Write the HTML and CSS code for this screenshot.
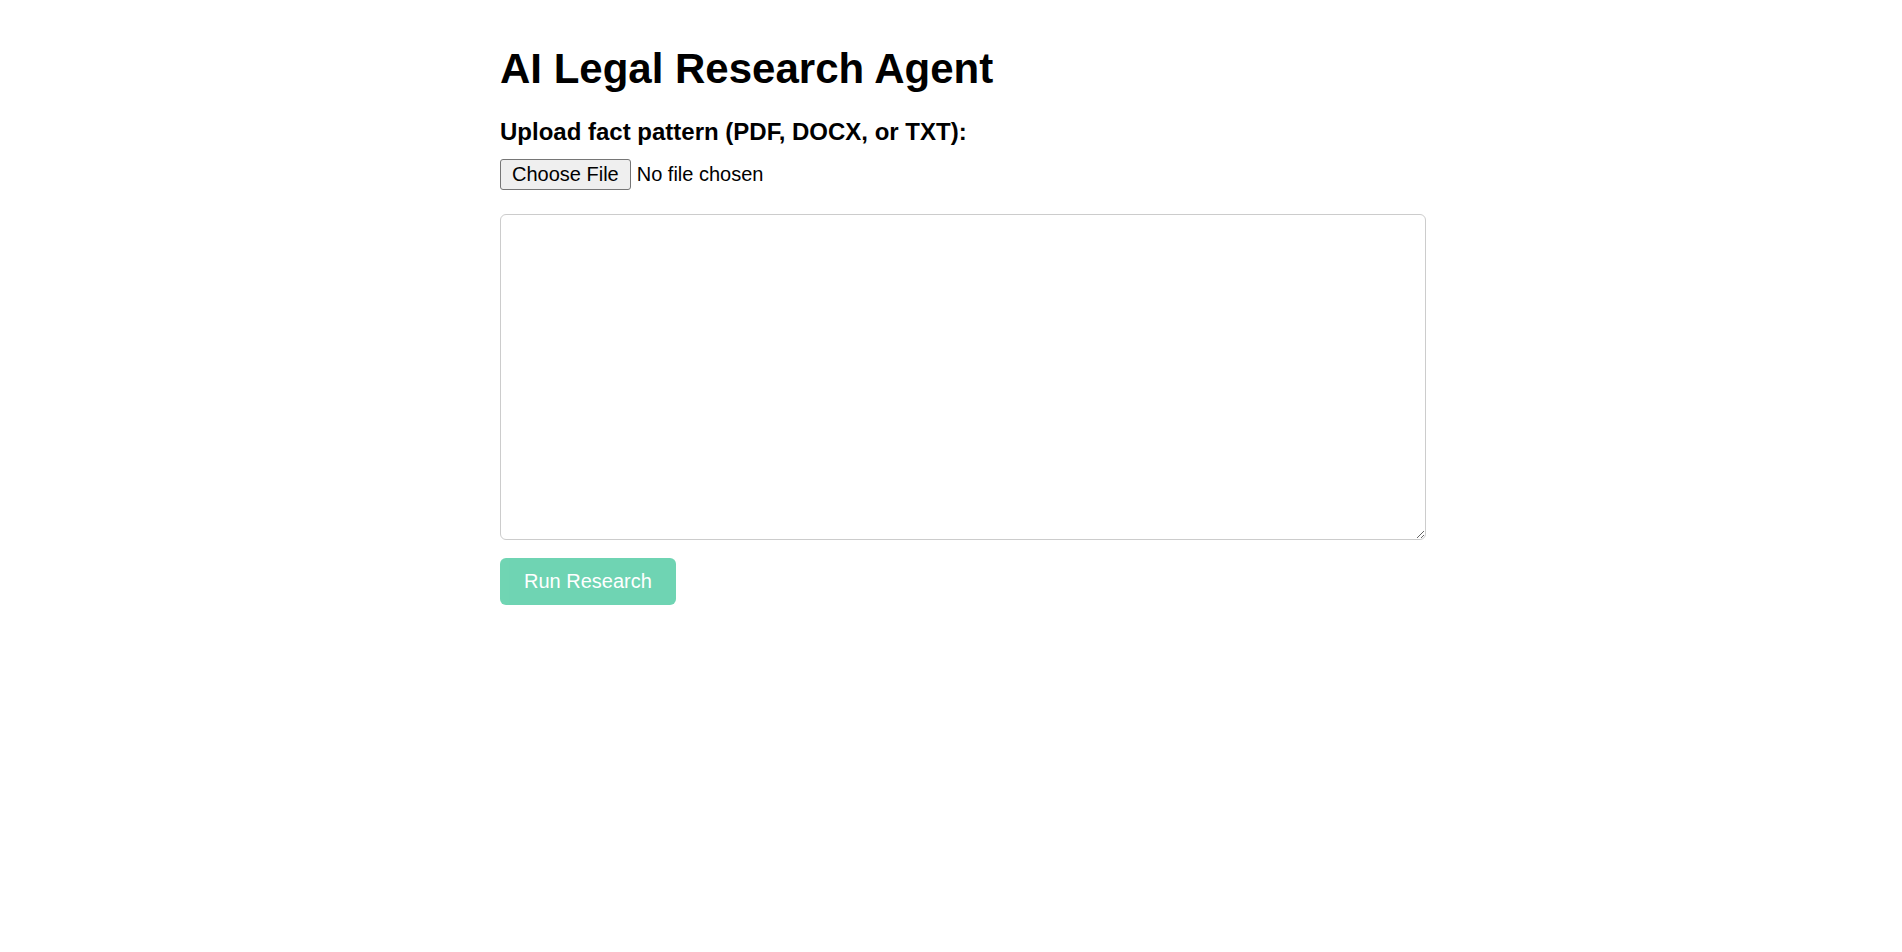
FILE: index.html
```html
<!DOCTYPE html>
<html lang="en">
<head>
<meta charset="utf-8">
<title>AI Legal Research Agent</title>
<link rel="stylesheet" href="styles.css">
</head>
<body>
<main class="container">
  <h1 class="title">AI Legal Research Agent</h1>
  <label class="upload-label" for="file">Upload fact pattern (PDF, DOCX, or TXT):</label>
  <input class="file-input" id="file" type="file" accept=".pdf,.docx,.txt">
  <textarea class="facts"></textarea>
  <button class="run-btn" disabled>Run Research</button>
</main>
</body>
</html>
```

FILE: styles.css
```css
html, body {
  margin: 0;
  padding: 0;
  background: #ffffff;
}

body {
  font-family: "Liberation Sans", Arial, sans-serif;
  color: #000;
}

.container {
  max-width: 902px;
  margin: 0 auto;
  padding-top: 45px;
}

.title {
  font-size: 42px;
  font-weight: bold;
  line-height: 48px;
  margin: 0 0 25px 0;
}

.upload-label {
  display: block;
  font-size: 24px;
  font-weight: bold;
  line-height: 28px;
  margin-bottom: 13px;
}

.file-input {
  display: block;
  font-family: "Liberation Sans", Arial, sans-serif;
  font-size: 20px;
  line-height: 23px;
  color: #000;
  margin: 0 0 24px 0;
}

.file-input::file-selector-button {
  font-family: "Liberation Sans", Arial, sans-serif;
  font-size: 20px;
  line-height: 23px;
  padding: 3px 11px;
  margin: 0 6px 0 0;
  border: 1px solid #767676;
  border-radius: 3px;
  background: #efefef;
  color: #000;
}

.facts {
  display: block;
  width: 100%;
  height: 300px;
  padding: 12px 11px;
  border: 1px solid #cccccc;
  border-radius: 6px;
  font-family: "Liberation Sans", Arial, sans-serif;
  font-size: 16px;
  margin: 0 0 18px 0;
  box-sizing: content-box;
  background: #fff;
}

.run-btn {
  display: block;
  font-family: "Liberation Sans", Arial, sans-serif;
  font-size: 20px;
  line-height: 23px;
  padding: 12px 24px;
  border: none;
  border-radius: 6px;
  background: #10b981;
  color: #fff;
  opacity: 0.6;
}
```
